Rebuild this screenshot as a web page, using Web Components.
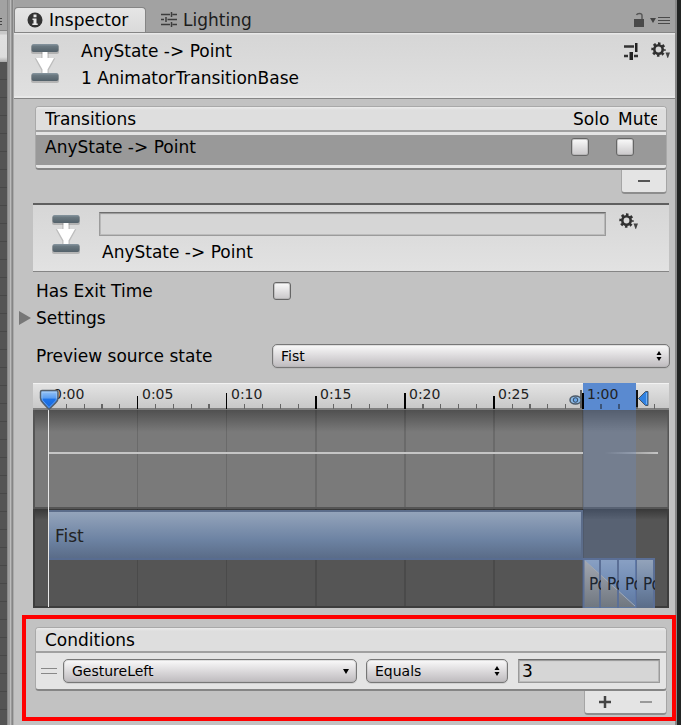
<!DOCTYPE html>
<html lang="en">
<head>
<meta charset="utf-8">
<title>Inspector</title>
<style>
html,body{margin:0;height:100%}
body{background:#c2c2c2;font:17px/20px "DejaVu Sans",Verdana,sans-serif;color:#000;overflow:hidden}
inspector-window{min-height:100vh}
</style>
</head>
<body>
<inspector-window>
  <dock-edge slot="before"></dock-edge>
  <editor-tabs></editor-tabs>
  <asset-header>
    <span slot="title">AnyState -&gt; Point</span>
    <span slot="subtitle">1 AnimatorTransitionBase</span>
  </asset-header>
  <transition-list></transition-list>
  <transition-header>AnyState -&gt; Point</transition-header>
  <toggle-row>Has Exit Time</toggle-row>
  <foldout-row>Settings</foldout-row>
  <popup-row value="Fist">Preview source state</popup-row>
  <timeline-view></timeline-view>
  <condition-list></condition-list>
</inspector-window>
<script>
const controls = `
*,:host{box-sizing:border-box}
button,input,select{font:inherit;color:inherit;margin:0}
button{border:0;padding:0;background:none;display:block}
input[type=checkbox]{appearance:none;width:18px;height:18px;border:1px solid #666;border-radius:3px;background:linear-gradient(#fafafa,#c9c7c9);box-shadow:inset 0 0 0 1px #aaa9}
input[type=text]{height:24px;padding:0 3px;border:1px solid #9b9b9b;border-top:1px solid #6d6d6d;border-radius:0;background:#d6d6d6;box-shadow:inset 0 1px 1px #9a9a9a,inset 0 0 0 1px #bcbcbc;min-width:0;outline:0}
.pop{display:grid;min-width:0}
.pop>*{grid-area:1/1}
.pop select{appearance:none;width:100%;height:24px;padding:0 24px 0 8px;border:1px solid #777;border-radius:5px;background:linear-gradient(#fafafa,#dcdadc 50%,#bebbbe);box-shadow:inset 0 0 0 1px #aaa5,0 1px 0 #9994;font-size:14px;line-height:20px}
.pop svg{justify-self:end;align-self:center;margin-right:7px;pointer-events:none}
svg{display:block;flex:none}`;
const updown = `<svg width="8" height="12" viewBox="0 0 8 12"><path d="M4 1 6.500 5h-5zM4 11 6.500 7h-5z"/></svg>`;
const down = `<svg width="8" height="8" viewBox="0 0 8 8"><path d="M1 2h6L4 7z"/></svg>`;
const listBox = `
.list{border:1px solid #a9a9a9;border-bottom:2px solid #858585;border-radius:4px;background:#e4e4e4;overflow:hidden}
.head{background:linear-gradient(#ececec,#dedede 3px);border-bottom:2px solid #a0a0a0;height:25px;padding-left:9px;line-height:24px}
.foot{margin-left:auto;background:#e4e4e4;border:1px solid #a5a5a5;border-top:0;border-bottom:2px solid #8d8d8d;border-radius:0 0 4px 4px;height:24px;display:flex;justify-content:space-around;align-items:center}`;

function define(name, html) {
  const t = document.createElement('template');
  t.innerHTML = html;
  customElements.define(name, class extends HTMLElement {
    constructor() {
      super();
      this.attachShadow({mode: 'open'}).append(t.content.cloneNode(true));
    }
    connectedCallback() {
      const s = this.shadowRoot.querySelector('[data-value]');
      if (s && this.hasAttribute('value')) s.options[0].textContent = this.getAttribute('value');
    }
  });
}

define('transition-icon', `<style>:host{display:block}svg{display:block}</style>
<svg width="32" height="42" viewBox="0 0 32 42">
<defs><linearGradient id="g" x2="0" y2="1"><stop stop-color="#8796a0"/><stop offset=".3" stop-color="#6a7880"/><stop offset="1" stop-color="#53616a"/></linearGradient></defs>
<path d="M13 10h6v7h6l-6 11v4h-6v-4L7 17h6z" fill="#888" opacity=".35" stroke="#888" stroke-width="1.500"/>
<rect x="2" y="3" width="28" height="9" rx="2" fill="#777" opacity=".4"/><rect x="2" y="32" width="28" height="9" rx="2" fill="#777" opacity=".4"/>
<path d="M13.500 9.500h5v6.500h6.500l-6.500 11.500v4h-5v-4L7 16h6.500z" fill="#fff"/>
<rect x="2.500" y="2" width="27" height="8" rx="2" fill="url(#g)"/><rect x="2.500" y="31" width="27" height="8" rx="2" fill="url(#g)"/></svg>`);

define('gear-icon', `<style>:host{display:block}button{border:0;background:none;padding:0;display:block}svg{display:block}</style>
<button aria-label="Options"><svg width="20" height="18" viewBox="0 0 20 18" fill="none" stroke="#303030">
<circle cx="7.500" cy="7.500" r="4.200" stroke-width="2.600"/>
<circle cx="7.500" cy="7.500" r="6" stroke-width="2.400" stroke-dasharray="2.500 2.212" stroke-dashoffset="1.250"/>
<path d="M14.500 10.500h4.500l-2 5.500h-.5z" fill="#444" stroke="none"/></svg></button>`);

define('dock-edge', `<style>
:host{display:grid;grid-template-rows:31px 31px 1fr;background:#8b8b8b;grid-template-columns:7px 7px}
.tabs{background:#a2a2a2;border-bottom:1px solid #858585;grid-column:1;display:flex;align-items:center;padding-top:14px}
.bar{background:linear-gradient(#c9c9c9 3px,#e0e0e0 4px,#ddd 26px,#aaa)}
.grid{background:repeating-linear-gradient(#545454 0 17px,#484848 17px 18px);grid-column:1}
.split{grid-column:2;grid-row:1/4;background:linear-gradient(90deg,#888 0 1px,#9c9c9c 1px 3px,#bcbcbc 3px 4px,#999 4px 5px,#858585 5px 6px,#aaa 6px)}
svg{display:block}
</style><div class="tabs"><svg width="3" height="8"><path d="M0 .5h2M0 3.500h2M0 6.500h2" stroke="#444"/></svg></div><div class="bar"></div><div class="grid"></div><div class="split"></div>`);

define('inspector-window', `<style>
:host{display:grid;grid-template-columns:14px minmax(0,1fr) 6px}
.panel{background:#c2c2c2;min-width:0}
.edge{background:linear-gradient(90deg,#888 0 2px,#222423 2px)}
</style><slot name="before"></slot><main class="panel"><slot></slot></main><div class="edge"></div>`);

define('editor-tabs', `<style>${controls}
:host{display:flex;align-items:end;height:33px;background:#a2a2a2;border-bottom:1px solid #858585;padding-right:5px}
button{display:flex;align-items:center;gap:6px;height:25px;padding:0 12px}
.on{background:linear-gradient(#e6e6e6,#dadada);border:1px solid #858585;border-bottom:0;border-radius:4px 4px 0 0;width:132px}
.off{padding:0 15px;color:#1c1c1c}
.tools{margin-left:auto;display:flex;gap:5px;height:25px;align-items:center}
.tools button{padding:0}
</style>
<button class="on"><svg width="16" height="16" viewBox="0 0 16 16"><circle cx="8" cy="8" r="7.500" fill="#333"/><path d="M6.500 2.500h3v2.800h-3zM5.500 6.500h4v5h1.200v1.600H5.300v-1.600h1.200V8.100h-1z" fill="#e8e8e8"/></svg>Inspector</button>
<button class="off"><svg width="16" height="17" viewBox="0 0 16 17" stroke="#3c3c3c" stroke-width="1.500" fill="none"><path d="M0 3.500h9M11.500 3.500H16M10.500 1v5M0 8.500h3M6.500 8.500H16M5 6v5M0 13.500h9M11.500 13.500H16M10.500 11v5"/></svg>Lighting</button>
<div class="tools"><button aria-label="Lock"><svg width="12" height="15" viewBox="0 0 12 15"><path d="M1 7h10v8H1z" fill="#4a4a4a"/><path d="M9 7V3.500Q9 1.500 6.500 1.500T3.500 3" fill="none" stroke="#555" stroke-width="1.400"/></svg></button>
<button aria-label="Window menu"><svg width="20" height="8" viewBox="0 0 20 8"><path d="M0 2h6L3 7z" fill="#444"/><path d="M8 1.500h12M8 4.500h12M8 7.500h12" stroke="#4a4a4a"/></svg></button></div>`);

define('asset-header', `<style>${controls}
:host{display:flex;height:66px;background:linear-gradient(#e8e8e8 1px,#d6d6d6 2px,#e0e0e0);border-bottom:1px solid #858585;box-shadow:inset 0 -2px #e8e8e8;padding:9px 4px 0 15px}
.t{margin-left:20px;line-height:27px;margin-top:-4px}
.t div{height:27px}
.i{margin-left:auto;display:flex;gap:12px;align-items:start}
</style><transition-icon></transition-icon><div class="t"><div><slot name="title"></slot></div><div><slot name="subtitle"></slot></div></div>
<div class="i"><button aria-label="Presets"><svg width="16" height="19" viewBox="0 0 16 19"><path d="M1 4.500h10M1 14h4M11 14h4" stroke="#333" stroke-width="2.500" fill="none"/><path d="M12 1h2.500v9H12zM6.500 10h3.500v8H6.500z" fill="#222"/></svg></button><gear-icon></gear-icon></div>`);

define('transition-list', `<style>${controls}${listBox}
:host{display:block;padding:7px 8px 0 21px}
.row,.head{display:grid;grid-template-columns:1fr 45px 41px;padding-right:9px}
.row{margin:3px 0;background:#999;height:30px;padding-left:9px;line-height:24px}
.row input{margin-top:3px}
.head span{overflow:hidden;white-space:nowrap}
.head span+span{padding-left:2px}
.foot{width:46px}
</style><div class="list"><div class="head"><span>Transitions</span><span id="s">Solo</span><span id="m">Mute</span></div>
<div class="row"><span>AnyState -&gt; Point</span><input type="checkbox" aria-labelledby="s"><input type="checkbox" aria-labelledby="m"></div></div>
<div class="foot"><button aria-label="Remove transition"><svg width="12" height="12"><path d="M0 6h12" stroke="#555" stroke-width="2"/></svg></button></div>`);

define('transition-header', `<style>${controls}
:host{display:grid;grid-template-columns:49px minmax(0,1fr) 33px;margin:9px 6px 0 19px;height:69px;border-top:2px solid #5f5f5f;border-bottom:1px solid #858585;background:linear-gradient(#d6d6d6,#e2e2e2);padding:7px 30px 0 17px}
input{width:100%;display:block}
.n{padding-left:3px;line-height:32px}
gear-icon,transition-icon{margin-top:1px}
gear-icon{justify-self:end}
</style><transition-icon></transition-icon><div><input type="text" aria-label="Name"><div class="n"><slot></slot></div></div><gear-icon></gear-icon>`);

const row = `${controls}
:host{display:block}
.r{display:grid;grid-template-columns:236px minmax(0,1fr);padding:0 5px 0 22px;align-items:center}`;
define('toggle-row', `<style>${row}.r{height:27px;margin-top:5px}input{margin-left:1px}</style><div class="r"><label for="c"><slot></slot></label><input id="c" type="checkbox"></div>`);
define('foldout-row', `<style>${controls}:host{display:block}button{height:27px;display:flex;align-items:center;gap:5px;padding-left:5px}</style>
<button aria-expanded="false"><svg width="12" height="14"><path d="M0 0 12 7 0 14z" fill="#777"/></svg><slot></slot></button>`);
define('popup-row', `<style>${row}.r{height:26px;margin-top:12px}</style><div class="r"><label for="c"><slot></slot></label><span class="pop"><select id="c" data-value><option></option></select>${updown}</span></div>`);

/* Timeline: 636 units wide, one frame every 17.833 units. */
const unit = 17.833, start = 15.5;
let ticks = '', lines = '';
for (let i = 1; i < 35; i++) {
  const x = start + i * unit, major = i % 5 === 0;
  if (major) {
    ticks += `<path d="M${x} ${i % 10 ? 13 : 10}V26" stroke="#000" stroke-width="${i > 10 ? 2 : 1}"/>`;
    lines += `<path d="M${x} 27V224" stroke="#000" stroke-opacity=".13" stroke-width="${i > 10 ? 2 : 1}"/>`;
  } else ticks += `<path d="M${x} 21V26" stroke="#666" stroke-width="1.300"/>`;
}
const clips = [0, 1, 2, 3].map(i => `<rect x="${550 + i * 18}" y="176" width="18" height="49" fill="url(#clip)"/><path d="M${567 + i * 18} 176v49" stroke="#5b6f96" stroke-width="2"/>`).join('');
define('timeline-view', `<style>
:host{display:grid;margin:14px 6px 0 19px;height:225px;overflow:hidden;grid-template:27px 99px 50px 49px/minmax(0,1fr)}
svg.bg{grid-area:1/1/5/2;width:100%;height:100%;display:block}
.cols{display:grid;grid-template-columns:16fr repeat(6,89fr) 86fr;z-index:1;min-width:0}
.cols>*{min-width:0}
.lab{grid-area:1/1;font-size:14px;line-height:22px;color:#222}
.lab span{padding-left:4px;white-space:nowrap}
.marks{grid-area:1/1/5/2;z-index:2}
.marks svg{display:block;overflow:visible}
.play{grid-column:2}.end{grid-column:8;display:flex;margin-left:-14px;padding-top:7px;gap:55px}
.one{grid-area:3/1;color:#222}.one span{grid-column:2/8;padding-left:6px;line-height:54px}
.two{grid-area:4/1;display:grid;grid-template-columns:550fr repeat(4,18fr) 14fr;z-index:1;color:#1c2530;font-family:"DejaVu Sans Condensed","DejaVu Sans",sans-serif;line-height:50px}
.two span{overflow:hidden;min-width:0;padding-left:6px}
</style>
<svg class="bg" viewBox="0 0 636 225" preserveAspectRatio="none">
<defs>
<linearGradient id="ruler" x2="0" y2="1"><stop stop-color="#e4e4e4"/><stop offset="1" stop-color="#c6c6c6"/></linearGradient>
<linearGradient id="shade" x2="0" y2="1"><stop stop-color="#505050"/><stop offset="1" stop-color="#7a7a7a"/></linearGradient>
<linearGradient id="shade2" x2="0" y2="1"><stop stop-color="#383838"/><stop offset="1" stop-color="#555"/></linearGradient>
<linearGradient id="clip" x2="0" y2="1"><stop stop-color="#94a4bb"/><stop offset=".6" stop-color="#6d83a3"/><stop offset="1" stop-color="#5a6c88"/></linearGradient>
<linearGradient id="grey" x2="0" y2="1"><stop stop-color="#a3a8b2"/><stop offset="1" stop-color="#707780"/></linearGradient>
<linearGradient id="fade"><stop stop-color="#c5c5c5" stop-opacity="0"/><stop offset="1" stop-color="#c5c5c5"/></linearGradient>
</defs>
<rect width="636" height="27" fill="url(#ruler)"/><path d="M0 .5h636" stroke="#f2f2f2"/>
<rect y="25" width="636" height="2" fill="#808080"/>
<g shape-rendering="crispEdges">${ticks}</g>
<rect y="27" width="636" height="99" fill="#7a7a7a"/><rect y="27" width="636" height="22" fill="url(#shade)"/>
<rect y="126" width="636" height="99" fill="#555"/><rect y="126" width="636" height="11" fill="url(#shade2)"/>
<g shape-rendering="crispEdges">${lines}</g>
<path d="M1 27v97M0 125h636M635.500 27v98" stroke="#555" stroke-width="2" fill="none"/>
<path d="M1 126v98H635V126" stroke="#3d3d3d" stroke-width="2" fill="none"/>
<path d="M15 70h535" stroke="#c5c5c5" stroke-width="2"/><rect x="572" y="69" width="53" height="2" fill="url(#fade)"/>
<rect x="16" y="127" width="534" height="50" fill="#5b6c8a"/><rect x="16" y="129" width="532" height="46" fill="url(#clip)"/><path d="M16 176h534" stroke="#586c90" stroke-width="2"/>
<rect x="550" width="53" height="27" fill="#5a8ad0"/>
<path d="M568 21v5M586 21v5" stroke="#3b5478" stroke-width="2"/><path d="M550 10v16" stroke="#000" stroke-width="2"/>
<rect x="550" y="27" width="53" height="197" fill="#628cd0" fill-opacity=".25"/>
<rect x="550" y="175" width="72" height="2" fill="#5b6f96"/>
${clips}
<rect x="550" y="175" width="53" height="50" fill="#6a98e0" fill-opacity=".25"/>
<path d="M551 177 602 224H551z" fill="url(#grey)"/>
<path d="M551 177 602 223" stroke="#a4a9b0"/><path d="M567 177v48M585 177v48M550.500 175v50" stroke="#5b6f96" stroke-width="2"/><path d="M550 176h72" stroke="#5b6f96" stroke-width="2"/>
</svg>
<div class="cols lab"><i></i><span>0:00</span><span>0:05</span><span>0:10</span><span>0:15</span><span>0:20</span><span>0:25</span><span>1:00</span></div>
<div class="cols one"><span>Fist</span></div>
<div class="two"><i></i><span>Po</span><span>Po</span><span>Po</span><span>Po</span></div>
<div class="cols marks"><div class="play"><svg width="1" height="225">
<defs><linearGradient id="b" x2="0" y2="1"><stop stop-color="#9cc8f8"/><stop offset=".4" stop-color="#5b9df0"/><stop offset=".45" stop-color="#1e73e8"/><stop offset="1" stop-color="#1266dd"/></linearGradient></defs>
<path d="M-.5 26v198" stroke="#e8e8e8"/><path d="M-8.500 9q0-1.500 1.500-1.500H7.500Q9 7.500 9 9V15Q9 18 6.500 20L0 26.500-6 20Q-8.500 18-8.500 15z" fill="url(#b)" stroke="#55606c" stroke-width="1.500"/><path d="M-7 9.500H7.500V15Q7.500 17.500 5.500 19L0 24.500-5 19Q-7 17.500-7 15z" fill="none" stroke="#a9d0fa" stroke-opacity=".5"/></svg></div>
<div class="end"><svg width="13" height="18" viewBox="0 0 13 18"><path d="M12 0v18" stroke="#333" stroke-width="1.500"/><ellipse cx="6.500" cy="10" rx="5.500" ry="4" fill="#8dbbe8" stroke="#4c5a68" stroke-width="1.500"/><circle cx="6.500" cy="10" r="2.300" fill="#6aa5e5" stroke="#34485e"/></svg>
<svg width="13" height="18" viewBox="0 0 13 18"><path d="M0 0v17" stroke="#111" stroke-width="2"/><path d="M11 1.500v14H8.500L1.500 8.500 8.500 1.500z" fill="#2f80e0" stroke="#465666"/><path d="M9.500 3v11" stroke="#6fb0f5"/></svg></div></div>`);

define('condition-list', `<style>${controls}${listBox}
:host{display:block;margin:7px -1px 0 8px;border:4px solid red;padding:8px 5px 2px 9px;position:relative}
.row{display:grid;grid-template-columns:16px minmax(0,309fr) minmax(0,152fr) minmax(0,142fr);align-items:center;height:36px;padding:0 6px 0 5px}
.a{margin:0 9px 0 6px}.b{margin-right:10px}
.row input{width:100%}
.foot{width:83px}
</style><div class="list"><div class="head">Conditions</div><div class="row">
<svg width="16" height="8"><path d="M0 1.500h16M0 6.500h16" stroke="#888"/></svg>
<span class="pop a"><select aria-label="Parameter"><option>GestureLeft</option></select>${down}</span>
<span class="pop b"><select aria-label="Comparison"><option>Equals</option></select>${updown}</span>
<input type="text" value="3" aria-label="Threshold"></div></div>
<div class="foot"><button aria-label="Add condition"><svg width="12" height="12"><path d="M0 6h12M6 0v12" stroke="#444" stroke-width="2.500"/></svg></button><button aria-label="Remove condition"><svg width="12" height="12"><path d="M0 6h12" stroke="#999" stroke-width="2"/></svg></button></div>`);
</script>
</body>
</html>
